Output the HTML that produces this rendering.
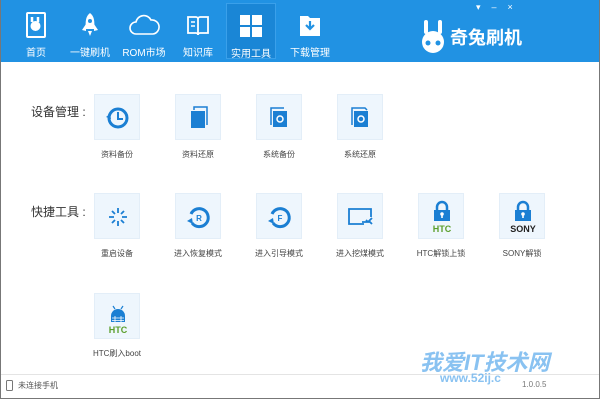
<!DOCTYPE html><html><head><meta charset="utf-8"><style>
body{margin:0;width:600px;height:400px;overflow:hidden;background:#fff;font-family:"Liberation Sans","Noto Sans CJK SC",sans-serif;position:relative}
.hd{position:absolute;left:0;top:0;width:600px;height:62px;background:#2192e3}
.nav{position:absolute;top:0;width:56px;height:62px;text-align:center;color:#fff;font-size:10px}
.nav .ic{position:absolute;left:16px;top:12px;width:24px;height:26px}
.nav span{position:absolute;left:0;right:0;top:44px}
.sel{background:#1a86d6;border:1px solid #3aa0ea;top:3px;height:54px}
.lab{position:absolute;font-size:12px;color:#333}
.t{position:absolute;width:46px;height:46px;background:#eef6fd;border:1px solid #e3eef8;box-sizing:border-box}
.t svg{position:absolute;left:0;top:0}
.tl{position:absolute;width:90px;text-align:center;font-size:8px;color:#444}
.bd{position:absolute;left:0;top:0;width:598px;height:398px;border:1px solid #777;border-top:none;pointer-events:none}
</style></head><body>
<div class="hd"></div>
<div class="nav" style="left:8px"><svg class="ic" viewBox="0 0 24 26"><rect x="3" y="1" width="18" height="24" rx="1" fill="none" stroke="#fff" stroke-width="2"/><path d="M8 5v5M14 5v5" stroke="#fff" stroke-width="2.5"/><circle cx="11.5" cy="14" r="5" fill="#fff"/></svg><span>首页</span></div>
<div class="nav" style="left:62px"><svg class="ic" viewBox="0 0 24 26"><path d="M12 1c4 3 5 8 4 16h-8c-1-8 0-13 4-16z" fill="#fff"/><path d="M8 12l-4 6 4 1zM16 12l4 6-4 1zM10 19h4l-2 5z" fill="#fff"/><circle cx="12" cy="9" r="2" fill="#2192e3"/></svg><span>一键刷机</span></div>
<div class="nav" style="left:116px"><svg class="ic" style="left:12px;width:32px" viewBox="0 0 32 26"><path d="M8 22a6 6 0 010-12 8 8 0 0115-2 7 7 0 012 14z" fill="none" stroke="#fff" stroke-width="1.6"/></svg><span>ROM市场</span></div>
<div class="nav" style="left:170px"><svg class="ic" viewBox="0 0 24 26"><path d="M2 5h8a2 2 0 012 2v16a2 2 0 00-2-2H2zM22 5h-8a2 2 0 00-2 2v16a2 2 0 012-2h8z" fill="none" stroke="#fff" stroke-width="1.8"/><path d="M5 10h4M5 14h4" stroke="#fff" stroke-width="1.5"/></svg><span>知识库</span></div>
<div class="nav sel" style="left:226px;width:48px"><svg class="ic" style="left:12px;top:9px" viewBox="0 0 24 26"><rect x="1" y="2" width="10" height="10" fill="#fff"/><rect x="13" y="2" width="10" height="10" fill="#fff"/><rect x="1" y="14" width="10" height="10" fill="#fff"/><rect x="13" y="14" width="10" height="10" fill="#fff"/></svg><span style="top:41px">实用工具</span></div>
<div class="nav" style="left:282px"><svg class="ic" viewBox="0 0 24 26"><path d="M2 4h8l2 2h10v18H2z" fill="#fff"/><path d="M12 9v8M8 13l4 4 4-4" stroke="#2192e3" stroke-width="2.2" fill="none"/></svg><span>下载管理</span></div>
<svg style="position:absolute;left:418px;top:20px" width="34" height="36" viewBox="0 0 34 36"><path d="M8 2v10M22 2v10" stroke="#fff" stroke-width="4" stroke-linecap="round"/><circle cx="15" cy="22" r="11" fill="#fff"/><circle cx="10" cy="23" r="2.5" fill="#2192e3"/><circle cx="20" cy="23" r="2.5" fill="#2192e3"/></svg>
<div style="position:absolute;left:450px;top:24px;color:#fff;font-size:18px;font-weight:bold;letter-spacing:0">奇兔刷机</div>
<div style="position:absolute;left:476px;top:2px;color:#fff;font-size:9px;letter-spacing:11px">▾–×</div>
<div class="lab" style="left:31px;top:103px">设备管理 :</div>
<div class="lab" style="left:31px;top:203px">快捷工具 :</div>
<!-- row 1 -->
<div class="t" style="left:94px;top:94px"><svg width="46" height="46"><circle cx="23" cy="23" r="9" fill="none" stroke="#1b7fd3" stroke-width="3"/><path d="M23 17v7h5" stroke="#1b7fd3" stroke-width="2" fill="none"/><path d="M11 22l4-3 1 5z" fill="#1b7fd3"/></svg></div>
<div class="t" style="left:175px;top:94px"><svg width="46" height="46"><rect x="15" y="16" width="14" height="17" fill="#1b7fd3"/><path d="M18 15v-3h13v18" stroke="#1b7fd3" stroke-width="1.5" fill="none"/></svg></div>
<div class="t" style="left:256px;top:94px"><svg width="46" height="46"><rect x="16" y="16" width="14" height="16" fill="#1b7fd3"/><path d="M14 30V13h13" stroke="#1b7fd3" stroke-width="1.5" fill="none"/><circle cx="23" cy="24" r="3" fill="none" stroke="#fff" stroke-width="1.5"/></svg></div>
<div class="t" style="left:337px;top:94px"><svg width="46" height="46"><rect x="16" y="16" width="14" height="16" fill="#1b7fd3"/><path d="M14 30V13h13l2 2" stroke="#1b7fd3" stroke-width="1.5" fill="none"/><circle cx="23" cy="24" r="3" fill="none" stroke="#fff" stroke-width="1.5"/></svg></div>
<div class="tl" style="left:72px;top:149px">资料备份</div><div class="tl" style="left:153px;top:149px">资料还原</div><div class="tl" style="left:234px;top:149px">系统备份</div><div class="tl" style="left:315px;top:149px">系统还原</div>
<!-- row 2 -->
<div class="t" style="left:94px;top:193px"><svg width="46" height="46" stroke="#1b7fd3" stroke-width="1.8"><path d="M23 14v5M23 27v5M14 23h5M27 23h5M17 17l3 3M29 29l-3-3M29 17l-3 3M17 29l3-3"/></svg></div>
<div class="t" style="left:175px;top:193px"><svg width="46" height="46"><path d="M15 20a9 9 0 11 1 9" fill="none" stroke="#1b7fd3" stroke-width="3"/><path d="M11 27l5-3 1 6z" fill="#1b7fd3"/><text x="23" y="27" font-size="8" fill="#1b7fd3" text-anchor="middle" font-family="Liberation Sans" font-weight="bold">R</text></svg></div>
<div class="t" style="left:256px;top:193px"><svg width="46" height="46"><path d="M15 20a9 9 0 11 1 9" fill="none" stroke="#1b7fd3" stroke-width="3"/><path d="M11 27l5-3 1 6z" fill="#1b7fd3"/><text x="23" y="27" font-size="8" fill="#1b7fd3" text-anchor="middle" font-family="Liberation Sans" font-weight="bold">F</text></svg></div>
<div class="t" style="left:337px;top:193px"><svg width="46" height="46" fill="none" stroke="#1b7fd3" stroke-width="1.8"><path d="M26 30H11V15h22v8"/><path d="M24 28h6l-2-2M34 24l-3 3 3 3"/></svg></div>
<div class="t" style="left:418px;top:193px"><svg width="46" height="46"><path d="M18 16v-3a5 5 0 0110 0v3" fill="none" stroke="#1b7fd3" stroke-width="2.5"/><rect x="15" y="16" width="16" height="11" fill="#1b7fd3"/><circle cx="23" cy="20" r="1.8" fill="#fff"/><rect x="22.2" y="20" width="1.6" height="4" fill="#fff"/><text x="23" y="38" font-size="9" fill="#5a9e2a" text-anchor="middle" font-family="Liberation Sans" font-weight="bold">HTC</text></svg></div>
<div class="t" style="left:499px;top:193px"><svg width="46" height="46"><path d="M18 16v-3a5 5 0 0110 0v3" fill="none" stroke="#1b7fd3" stroke-width="2.5"/><rect x="15" y="16" width="16" height="11" fill="#1b7fd3"/><circle cx="23" cy="20" r="1.8" fill="#fff"/><rect x="22.2" y="20" width="1.6" height="4" fill="#fff"/><text x="23" y="38" font-size="9" fill="#222" text-anchor="middle" font-family="Liberation Sans" font-weight="bold">SONY</text></svg></div>
<div class="tl" style="left:72px;top:248px">重启设备</div><div class="tl" style="left:153px;top:248px">进入恢复模式</div><div class="tl" style="left:234px;top:248px">进入引导模式</div><div class="tl" style="left:315px;top:248px">进入挖煤模式</div><div class="tl" style="left:396px;top:248px">HTC解锁上锁</div><div class="tl" style="left:477px;top:248px">SONY解锁</div>
<!-- row 3 -->
<div class="t" style="left:94px;top:293px"><svg width="46" height="46"><path d="M16 22a7 7 0 0114 0v6H16z" fill="#1b7fd3"/><path d="M18 12l2 3M28 12l-2 3" stroke="#1b7fd3" stroke-width="1.2"/><path d="M17 24h12M17 26.5h12M20 22v6M26 22v6" stroke="#fff" stroke-width="0.8"/><text x="23" y="39" font-size="9" fill="#5a9e2a" text-anchor="middle" font-family="Liberation Sans" font-weight="bold">HTC</text></svg></div>
<div class="tl" style="left:72px;top:348px">HTC刷入boot</div>
<div style="position:absolute;left:0;top:374px;width:600px;height:1px;background:#e4e4e4"></div>
<svg style="position:absolute;left:6px;top:380px" width="8" height="11"><rect x="0.5" y="0.5" width="6" height="10" rx="1" fill="none" stroke="#777"/></svg>
<div style="position:absolute;left:18px;top:380px;font-size:8px;color:#555">未连接手机</div>
<div style="position:absolute;left:420px;top:345px;font-size:22px;font-weight:bold;color:#6cb3ee;opacity:.8;font-style:italic">我爱IT技术网</div>
<div style="position:absolute;left:440px;top:371px;font-size:12px;font-weight:bold;color:#6cb3ee;opacity:.8">www.52ij.c</div>
<div style="position:absolute;left:522px;top:380px;font-size:8px;color:#777">1.0.0.5</div>
<div class="bd"></div>
</body></html>
